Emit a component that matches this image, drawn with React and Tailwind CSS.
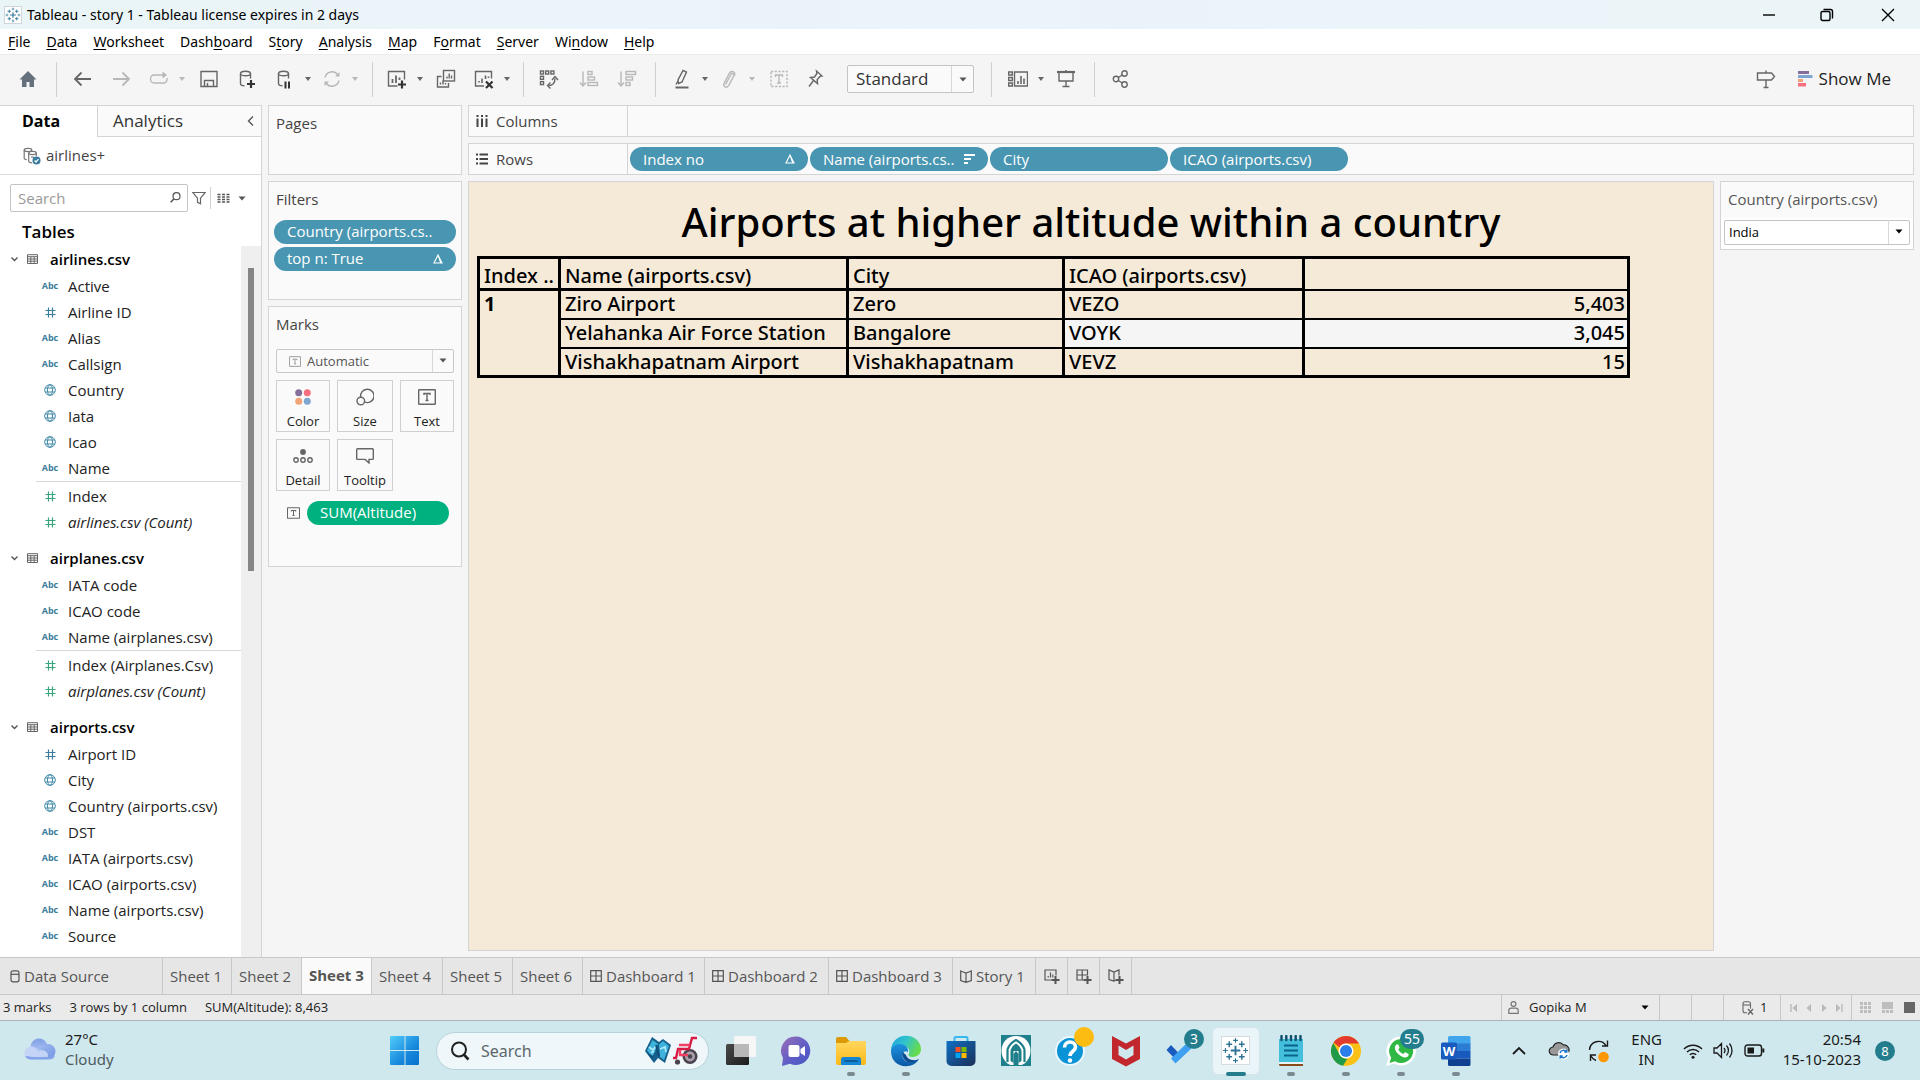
import { useState } from "react";

/* ---------- small helpers ---------- */

function Icon({ size = 20, w, h, box = "0 0 20 20", className = "", children }) {
  return (
    <svg
      width={w || size}
      height={h || size}
      viewBox={box}
      fill="none"
      stroke="currentColor"
      strokeWidth="1.4"
      className={"shrink-0 " + className}
      aria-hidden="true"
    >
      {children}
    </svg>
  );
}

function Caret({ className = "text-[#555]" }) {
  return (
    <svg width="8" height="5" viewBox="0 0 8 5" className={"shrink-0 " + className} aria-hidden="true">
      <path d="M0.5 0.5h7L4 4.5z" fill="currentColor" />
    </svg>
  );
}

function Tool({ label, className = "ml-[18px]", dim = false, children }) {
  return (
    <button
      type="button"
      aria-label={label}
      className={(dim ? "text-[#b8b8b8] " : "text-[#666] ") + "flex w-5 shrink-0 justify-center " + className}
    >
      <Icon>{children}</Icon>
    </button>
  );
}

function ToolCaret({ label, dim = false }) {
  return (
    <button type="button" aria-label={label} className="ml-[9px] flex h-5 w-2 shrink-0 items-center justify-center">
      <svg width="6" height="4" viewBox="0 0 6 4" aria-hidden="true">
        <path d="M0 0h6L3 4z" fill={dim ? "#b8b8b8" : "#666"} />
      </svg>
    </button>
  );
}

function Divider({ className = "ml-[18px]" }) {
  return <div className={"h-[35px] w-px shrink-0 bg-[#d0d0d0] " + className} />;
}

/* ---------- title, menu, toolbar ---------- */

function TableauMark({ size = 20, color = "#2f7396" }) {
  return (
    <svg width={size} height={size} viewBox="0 0 28 28" fill="none" stroke={color} aria-hidden="true">
      <path d="M14 9v10M9 14h10" strokeWidth="2" />
      <path d="M14 1v5M11.500 3.500h5M14 22v5M11.500 24.500h5" strokeWidth="1.100" />
      <path d="M3.500 11.500v5M1 14h5M24.500 11.500v5M22 14h5" strokeWidth="1.100" />
      <path
        d="M7.500 4.500v6M4.500 7.500h6M20.500 4.500v6M17.500 7.500h6M7.500 17.500v6M4.500 20.500h6M20.500 17.500v6M17.500 20.500h6"
        strokeWidth="1.500"
      />
    </svg>
  );
}

function TitleBar() {
  return (
    <header className="flex h-[29px] shrink-0 items-center bg-gradient-to-r from-[#eaf5f7] via-[#ebf3fb] to-[#ebf5f7] text-black">
      <div className="ml-1 flex size-[18px] items-center justify-center border border-[#cfd5d8] bg-white">
        <TableauMark size={16} />
      </div>
      <h1 className="ml-[5px] font-['Noto_Sans'] text-[14px]">Tableau - story 1 - Tableau license expires in 2 days</h1>
      <div className="ml-auto flex">
        <button type="button" aria-label="Minimize" className="flex h-7 w-[58px] items-center justify-center">
          <Icon size={14} box="0 0 14 14"><path d="M1 7h12" /></Icon>
        </button>
        <button type="button" aria-label="Restore" className="flex h-7 w-[58px] items-center justify-center">
          <Icon size={14} box="0 0 14 14">
            <rect x="1" y="3.500" width="9" height="9" rx="1.500" />
            <path d="M3.500 1.500h7a2 2 0 0 1 2 2v7" />
          </Icon>
        </button>
        <button type="button" aria-label="Close" className="flex h-7 w-16 items-center justify-center">
          <Icon size={14} box="0 0 14 14"><path d="M1 1l12 12M13 1L1 13" /></Icon>
        </button>
      </div>
    </header>
  );
}

const MENUS = [
  ["", "F", "ile"],
  ["", "D", "ata"],
  ["", "W", "orksheet"],
  ["Dash", "b", "oard"],
  ["S", "t", "ory"],
  ["", "A", "nalysis"],
  ["", "M", "ap"],
  ["F", "o", "rmat"],
  ["", "S", "erver"],
  ["Wi", "n", "dow"],
  ["", "H", "elp"],
];

function MenuBar() {
  return (
    <nav className="flex h-[25px] shrink-0 items-center gap-4 bg-white pl-2 font-['Noto_Sans'] text-[14px] text-black">
      {MENUS.map(([a, u, b]) => (
        <button type="button" key={a + u + b}>
          {a}
          <span className="underline underline-offset-2">{u}</span>
          {b}
        </button>
      ))}
    </nav>
  );
}

function Toolbar() {
  return (
    <div className="flex h-[51px] shrink-0 items-center border-t border-[#ececec] bg-[#f5f5f5] pb-0.5">
      <Tool label="Home">
        <path d="M10 2L1.500 10.500H4V18h4.500v-5h3v5H16v-7.500h2.500z" fill="#64707c" stroke="none" />
      </Tool>
      <Divider />
      <Tool label="Back" className="ml-4"><path d="M18 10H2M8.500 3.500L2 10l6.500 6.500" strokeWidth="1.800" /></Tool>
      <Tool label="Forward" dim><path d="M2 10h16M11.500 3.500L18 10l-6.500 6.500" strokeWidth="1.800" /></Tool>
      <Tool label="Redo" dim>
        <path d="M17 6H5a3.500 4 0 0 0 0 8h10a3.500 4 0 0 0 3-5" />
        <path d="M13.500 2.500L18 6l-4.500 3.500z" fill="currentColor" stroke="none" />
      </Tool>
      <ToolCaret label="Redo options" dim />
      <Tool label="Save" className="ml-[13px]">
        <path d="M2 2.500h16v15H2z" />
        <path d="M5.500 17.500v-6h9v6M8.500 17.500v-3.500" />
      </Tool>
      <Tool label="New data source">
        <ellipse cx="8.500" cy="4.500" rx="5" ry="2.300" />
        <path d="M3.500 4.500v10c0 1.500 1.500 2.300 4 2.300M13.500 4.500v5" />
        <path d="M14 11v8M10 15h8" stroke="#333" strokeWidth="2.200" />
      </Tool>
      <Tool label="Pause updates">
        <ellipse cx="8.500" cy="4.500" rx="5" ry="2.300" />
        <path d="M3.500 4.500v10c0 1.500 1.500 2.300 4 2.300M13.500 4.500v5" />
        <path d="M10.500 12.500v7M14 12.500v7" stroke="#333" strokeWidth="2" />
      </Tool>
      <ToolCaret label="Pause options" />
      <Tool label="Refresh" dim className="ml-[10px]">
        <path d="M3 8.500A7.200 7.200 0 0 1 16 6M17 11.500A7.200 7.200 0 0 1 4 14" />
        <path d="M17.500 3v4.500H13zM2.500 17v-4.500H7z" fill="currentColor" stroke="none" />
      </Tool>
      <ToolCaret label="Refresh options" dim />
      <Divider className="ml-[13px]" />
      <Tool label="New worksheet" className="ml-[14px]">
        <path d="M10.500 17H1.500V2.500H17.500v8" />
        <path d="M5.500 14V10M9 14V6.500M12.500 11V8.500" strokeWidth="1.800" />
        <path d="M15 11.500v8M11 15.500h8" stroke="#333" strokeWidth="2.200" />
      </Tool>
      <ToolCaret label="Worksheet options" />
      <Tool label="Duplicate" className="ml-3">
        <rect x="7.500" y="1.500" width="11" height="10.500" />
        <path d="M5.500 7.500H1.500v10.500h11v-4M4.500 15.500v-2M7 15.500v-4M9.500 15.500v-1.500M11 9.500v-2M13.200 9.500v-5M15.500 9.500v-3" />
      </Tool>
      <Tool label="Clear sheet">
        <path d="M10 17H1.500V2.500H17.500v7" />
        <path d="M5 13.500v-1.500M8 14V9.500M11.500 10V6.500M14.500 9V7.500" strokeWidth="1.600" />
        <path d="M12 12.500l6.500 6.500M18.500 12.500L12 19" stroke="#333" strokeWidth="2.200" />
      </Tool>
      <ToolCaret label="Clear options" />
      <Divider className="ml-3" />
      <Tool label="Swap rows and columns" className="ml-[15px]">
        <rect x="1.500" y="2" width="3" height="3" />
        <rect x="6.700" y="2" width="3" height="3" />
        <rect x="11.900" y="2" width="3" height="3" />
        <rect x="1.500" y="7.300" width="3" height="3" />
        <rect x="1.500" y="12.600" width="3" height="3" />
        <path d="M9.500 16.500c4 0 6.500-2.500 6.500-7" />
        <path d="M13 11l3-3.500 3 3.500M11.500 13.500l-3 3 3 3" />
      </Tool>
      <Tool label="Sort ascending" dim className="ml-5">
        <path d="M4 2.500v14M1 13.500L4 17l3-3.500" />
        <rect x="9" y="2.500" width="4" height="3" />
        <rect x="9" y="8" width="6.500" height="3" />
        <rect x="9" y="13.500" width="9.500" height="3" />
      </Tool>
      <Tool label="Sort descending" dim>
        <path d="M4 2.500v14M1 13.500L4 17l3-3.500" />
        <rect x="9" y="2.500" width="9.500" height="3" />
        <rect x="9" y="8" width="6.500" height="3" />
        <rect x="9" y="13.500" width="4" height="3" />
      </Tool>
      <Divider />
      <Tool label="Highlight" className="ml-4">
        <path d="M11 1.500l3.500 1.500-4.500 10-3.500 1.500-.5-3.500zM6 12l-2 3.500" />
        <path d="M3.500 18.500h13" strokeWidth="2" />
      </Tool>
      <ToolCaret label="Highlight options" />
      <Tool label="Group members" dim className="ml-[10px]">
        <path d="M6.500 15.500l5.500-10c1.200-2 3.800-.8 2.800 1.400l-5 9.500c-2 3.300-6.500 1.500-4.600-2.300l5-9.500C12 1 17 2.500 15.500 6.500" />
      </Tool>
      <ToolCaret label="Group options" dim />
      <Tool label="Show mark labels" dim className="ml-[13px]">
        <rect x="2" y="2.500" width="16" height="15" strokeDasharray="2.200 1.500" />
        <path d="M6.500 8V6h7v2M10 6v8M8 14h4" />
      </Tool>
      <Tool label="Fix axes" className="ml-4">
        <path d="M11.500 2l5.500 5-2 .4-2.800 3 .3 4.100L5.500 8.500l4-.5 2.400-3.500zM8.500 11.500L4 17.500" />
      </Tool>
      <label className="ml-[22px] flex">
        <span className="sr-only">Fit</span>
        <span className="relative flex">
          <select className="h-7 w-[127px] appearance-none rounded-xs border border-[#c4c4c4] bg-[#fafafa] pl-2 text-[17px] leading-6 text-[#333]">
            <option>Standard</option>
          </select>
          <span className="pointer-events-none absolute inset-y-px right-px flex w-[22px] items-center justify-center border-l border-[#d8d8d8]">
            <Caret />
          </span>
        </span>
      </label>
      <Divider className="ml-[17px]" />
      <Tool label="Show cards" className="ml-4">
        <path d="M.7 3h3.600v3H.7zM.7 8.500h3.600v3H.7zM.7 14h3.600v3H.7zM6.500 3h13v14h-13z" />
        <path d="M10 15v-3M13 15V7M16 15V9.500" strokeWidth="1.600" />
      </Tool>
      <ToolCaret label="Card options" />
      <Tool label="Presentation mode" className="ml-[11px]">
        <path d="M1 3h18" strokeWidth="2.200" />
        <path d="M3 4v8h14V4M10 12v5.500M6.500 17.500h7M10 1v2" />
      </Tool>
      <Divider />
      <Tool label="Share" className="ml-4">
        <circle cx="5" cy="10" r="2.700" />
        <circle cx="13.500" cy="4.500" r="2.700" />
        <circle cx="13.500" cy="15.500" r="2.700" />
        <path d="M7.300 8.500l4-2.500M7.300 11.500l4 2.500" />
      </Tool>
      <div className="ml-auto flex items-center pr-[29px]">
        <Tool label="Data guide" className="mr-[22px]">
          <path d="M1.500 4h14l3 3.500-3 3.500h-14zM10 1.500V4M10 11v7.500M7.500 18.500h5" />
        </Tool>
        <button type="button" className="flex items-center gap-1.5 text-[17px] text-[#222]">
          <svg width="15" height="16" viewBox="0 0 15 16" aria-hidden="true">
            <path d="M0 0h11v3H0z" fill="#84709a" />
            <path d="M0 4h14.500v3H0z" fill="#7fa6cf" />
            <path d="M0 8h5v3H0z" fill="#f2a477" />
            <path d="M0 12h8v3.500H0z" fill="#f8707f" />
          </svg>
          Show Me
        </button>
      </div>
    </div>
  );
}

/* ---------- data pane ---------- */

const TABLES = [
  {
    name: "airlines.csv",
    dims: [
      ["abc", "Active"],
      ["num", "Airline ID"],
      ["abc", "Alias"],
      ["abc", "Callsign"],
      ["geo", "Country"],
      ["geo", "Iata"],
      ["geo", "Icao"],
      ["abc", "Name"],
    ],
    measures: ["Index", "airlines.csv (Count)"],
  },
  {
    name: "airplanes.csv",
    dims: [
      ["abc", "IATA code"],
      ["abc", "ICAO code"],
      ["abc", "Name (airplanes.csv)"],
    ],
    measures: ["Index (Airplanes.Csv)", "airplanes.csv (Count)"],
  },
  {
    name: "airports.csv",
    dims: [
      ["num", "Airport ID"],
      ["geo", "City"],
      ["geo", "Country (airports.csv)"],
      ["abc", "DST"],
      ["abc", "IATA (airports.csv)"],
      ["abc", "ICAO (airports.csv)"],
      ["abc", "Name (airports.csv)"],
      ["abc", "Source"],
    ],
    measures: [],
  },
];

function FieldIcon({ kind }) {
  if (kind === "abc") return <span className="text-[9px] font-bold text-[#3c7d9c]">Abc</span>;
  if (kind === "geo")
    return (
      <Icon size={12} box="0 0 12 12" className="text-[#4189a8]">
        <g strokeWidth="1">
          <circle cx="6" cy="6" r="5.300" />
          <ellipse cx="6" cy="6" rx="2.500" ry="5.300" />
          <path d="M1.200 4h9.600M1.200 8h9.600" />
        </g>
      </Icon>
    );
  return (
    <Icon size={11} box="0 0 11 11" className={kind === "sum" ? "text-[#3aa57d]" : "text-[#3c7d9c]"}>
      <path d="M3.500 .5v10M7.500 .5v10M.5 3.500h10M.5 7.500h10" strokeWidth="1.200" />
    </Icon>
  );
}

function Field({ kind, name }) {
  return (
    <li className="flex h-[26px] items-center">
      <span className="flex w-7 justify-center">
        <FieldIcon kind={kind} />
      </span>
      <span className={"ml-1 whitespace-nowrap text-[15px] text-[#222]" + (name.includes("(Count)") ? " italic" : "")}>
        {name}
      </span>
    </li>
  );
}

function DataPane() {
  return (
    <aside className="flex w-[262px] shrink-0 flex-col border-r border-[#d4d4d4] bg-white">
      <div className="flex h-8 shrink-0" role="tablist">
        <button type="button" role="tab" aria-selected="true" className="w-[97px] border-t border-[#d4d4d4] pr-[15px] pb-0.5 text-[16px] font-bold text-black">
          Data
        </button>
        <button
          type="button"
          role="tab"
          aria-selected="false"
          className="flex flex-1 items-center justify-between border border-r-0 border-[#d4d4d4] bg-[#fafafa] pr-[7px] pl-[15px] text-[17px] text-[#333]"
        >
          Analytics
          <Icon w={7} h={12} box="0 0 7 12" className="text-[#555]"><path d="M6 1.500L1.500 6 6 10.500" /></Icon>
        </button>
      </div>
      <div className="flex h-[38px] shrink-0 items-center border-b border-[#dcdcdc] pl-[23px] text-[15px] text-[#444]">
        <Icon size={18} box="0 0 18 18" className="mr-[5px] text-[#777]">
          <g strokeWidth="1.200">
            <ellipse cx="5" cy="3" rx="3.800" ry="1.600" />
            <path d="M1.200 3v8c0 1 1.200 1.600 2.500 1.700" />
            <ellipse cx="9.500" cy="6" rx="3.800" ry="1.600" />
            <path d="M5.700 6v8c0 1.200 1.500 1.800 3.500 1.800M13.300 6v3M8 10h2l1 2" />
          </g>
          <circle cx="13.500" cy="13.500" r="4" fill="#3a7ca0" stroke="none" />
          <path d="M11.600 13.500l1.400 1.500 2.500-2.800" stroke="#fff" strokeWidth="1.200" />
        </Icon>
        airlines+
      </div>
      <div className="flex h-[46px] shrink-0 items-center pl-2.5">
        <label className="relative flex">
          <span className="sr-only">Search fields</span>
          <input
            type="text"
            placeholder="Search"
            className="h-7 w-[178px] rounded-xs border border-[#c4c4c4] bg-white pl-[7px] text-[15px] leading-6 placeholder:text-[#9a9a9a]"
          />
          <Icon size={11} box="0 0 11 11" className="pointer-events-none absolute top-2 right-[7px] text-[#555]">
            <circle cx="6.500" cy="4.200" r="3.500" strokeWidth="1.200" />
            <path d="M4 6.700L.7 10.300" strokeWidth="1.600" />
          </Icon>
        </label>
        <button type="button" aria-label="Filter fields" className="ml-1 text-[#666]">
          <Icon size={14} box="0 0 14 14"><path d="M.8 1.500h12.400L8.500 7.200v5.600l-3-1.500V7.200z" strokeWidth="1.200" /></Icon>
        </button>
        <span className="ml-1 h-[22px] w-px bg-[#d0d0d0]" />
        <button type="button" aria-label="View options" className="ml-1.5 flex items-center gap-2 text-[#555]">
          <Icon w={13} h={11} box="0 0 13 11">
            <path d="M.5 1.500h3M5 1.500h3M9.500 1.500h3M.5 4h3M5 4h3M9.500 4h3M.5 6.500h3M5 6.500h3M9.500 6.500h3M.5 9h3M5 9h3M9.500 9h3" strokeWidth="1.300" />
          </Icon>
          <Caret />
        </button>
      </div>
      <h2 className="flex h-[25px] shrink-0 items-center pb-1 pl-[22px] text-[17px] leading-5 font-semibold text-black">Tables</h2>
      <div className="flex min-h-0 flex-1">
        <div className="flex min-w-0 flex-1 flex-col gap-2.5">
          {TABLES.map((t) => (
            <section key={t.name}>
              <h3 className="flex h-[27px] items-center pb-px pl-[11px] text-[15px] font-semibold text-black">
                <Icon w={7} h={6} box="0 0 7 6" className="text-[#555]"><path d="M.5 1.500l3 3 3-3" /></Icon>
                <Icon w={11} h={10} box="0 0 11 10" className="ml-[9px] text-[#666]">
                  <path d="M.5 .7h10v8.800H.5zM.5 2.700h10M.5 5h10M.5 7.200h10M3.800 3v6M7.200 3v6" strokeWidth="1" />
                </Icon>
                <span className="ml-3">{t.name}</span>
              </h3>
              <ul className="ml-9">
                {t.dims.map(([k, n]) => (
                  <Field key={n} kind={k} name={n} />
                ))}
              </ul>
              {t.measures.length > 0 && (
                <ul className="ml-9 border-t border-[#d8d8d8] pt-px">
                  {t.measures.map((n) => (
                    <Field key={n} kind="sum" name={n} />
                  ))}
                </ul>
              )}
            </section>
          ))}
        </div>
        <div className="w-5 shrink-0 bg-[#efefef] pt-[22px] pl-[7px]">
          <div className="h-[303px] w-1.5 bg-[#858585]" />
        </div>
      </div>
    </aside>
  );
}

/* ---------- shelves and cards ---------- */

function Delta() {
  return (
    <Icon w={10} h={10} box="0 0 10 10" className="ml-auto">
      <path d="M5 1L1 9h8zM5 1l2.800 8" strokeWidth="1.100" />
    </Icon>
  );
}

function Pill({ children, icon, className = "bg-[#4996b2]" }) {
  return (
    <button
      type="button"
      className={"flex h-6 items-center rounded-full pr-[13px] pl-[13px] text-[15px] font-medium whitespace-nowrap text-white " + className}
    >
      {children}
      {icon}
    </button>
  );
}

function TIcon({ w = 13, h = 12, className = "text-[#666]" }) {
  return (
    <Icon w={w} h={h} box="0 0 18 16" className={className}>
      <rect x=".7" y=".7" width="16.600" height="14.600" rx=".5" />
      <path d="M6 6V4.500h6V6M9 4.500v7M7.500 11.500h3" />
    </Icon>
  );
}

function MarkButton({ label, children }) {
  return (
    <button
      type="button"
      className="flex h-[52px] flex-col items-center justify-between border border-[#d0d0d0] bg-[#fafafa] pt-[7px] text-[13px] text-[#222]"
    >
      <span className="flex h-[18px] items-center text-[#666]">{children}</span>
      <span className="leading-5">{label}</span>
    </button>
  );
}

function Cards() {
  const card = "border border-[#d4d4d4] bg-[#fafafa]";
  return (
    <div className="flex w-[194px] shrink-0 flex-col gap-1.5">
      <section className={card + " h-[70px] px-[7px] pt-1.5"}>
        <h2 className="text-[15px] text-[#444]">Pages</h2>
      </section>
      <section className={card + " h-[119px] px-[5px] pt-1.5"}>
        <h2 className="pl-0.5 text-[15px] text-[#444]">Filters</h2>
        <div className="mt-[9px] flex flex-col gap-[3px]">
          <Pill>Country (airports.cs..</Pill>
          <Pill icon={<Delta />}>top n: True</Pill>
        </div>
      </section>
      <section className={card + " h-[261px] px-[7px] pt-1.5"}>
        <h2 className="text-[15px] text-[#444]">Marks</h2>
        <label className="relative mt-[13px] flex">
          <span className="sr-only">Mark type</span>
          <select className="h-6 w-full appearance-none rounded-xs border border-[#c8c8c8] bg-[#fafafa] pl-[30px] text-[13px] leading-5 text-[#555]">
            <option>Automatic</option>
          </select>
          <TIcon w={12} h={11} className="pointer-events-none absolute top-[7px] left-[13px] text-[#999]" />
          <span className="pointer-events-none absolute inset-y-px right-px flex w-[21px] items-center justify-center border-l border-[#d8d8d8]">
            <Caret />
          </span>
        </label>
        <div className="mt-[7px] grid grid-cols-[54fr_56fr_54fr] gap-[7px]">
          <MarkButton label="Color">
            <svg width="16" height="16" viewBox="0 0 16 16" aria-hidden="true">
              <circle cx="3.700" cy="3.700" r="3.500" fill="#84709a" />
              <circle cx="12.300" cy="3.700" r="3.500" fill="#f8707f" />
              <circle cx="3.700" cy="12.300" r="3.500" fill="#f2a477" />
              <circle cx="12.300" cy="12.300" r="3.500" fill="#7fa6cf" />
            </svg>
          </MarkButton>
          <MarkButton label="Size">
            <Icon size={18} box="0 0 18 18">
              <path d="M4.800 9.500A6.700 6.700 0 1 1 9 14.200" />
              <circle cx="4.800" cy="13" r="3.800" />
            </Icon>
          </MarkButton>
          <MarkButton label="Text"><TIcon w={18} h={16} /></MarkButton>
          <MarkButton label="Detail">
            <Icon w={20} h={14} box="0 0 20 14">
              <circle cx="10" cy="3" r="2.900" fill="currentColor" stroke="none" />
              <circle cx="3" cy="11" r="2.200" />
              <circle cx="10" cy="11" r="2.200" />
              <circle cx="17" cy="11" r="2.200" />
            </Icon>
          </MarkButton>
          <MarkButton label="Tooltip">
            <Icon w={18} h={16} box="0 0 18 16"><path d="M1.500 .8h15a.8.8 0 0 1 .8.8v9a.8.8 0 0 1-.8.8H13V15l-3.800-3.600H1.500a.8.8 0 0 1-.8-.8v-9a.8.8 0 0 1 .8-.8z" /></Icon>
          </MarkButton>
        </div>
        <div className="mt-2.5 flex items-center pr-[5px] pl-[11px]">
          <TIcon />
          <Pill className="ml-[7px] flex-1 bg-[#00b180]">SUM(Altitude)</Pill>
        </div>
      </section>
    </div>
  );
}

function Shelf({ label, icon, children }) {
  return (
    <div className="flex h-8 border border-[#d4d4d4] bg-[#fafafa]">
      <div className="flex w-[159px] shrink-0 items-center border-r border-[#d4d4d4] pl-[7px] text-[15px] text-[#444]">
        {icon}
        {label}
      </div>
      <div className="flex items-center gap-0.5 pl-0.5">{children}</div>
    </div>
  );
}

/* ---------- worksheet ---------- */

const ROWS = [
  ["Ziro Airport", "Zero", "VEZO", "5,403"],
  ["Yelahanka Air Force Station", "Bangalore", "VOYK", "3,045"],
  ["Vishakhapatnam Airport", "Vishakhapatnam", "VEVZ", "15"],
];

function Sheet() {
  const cell = "h-[29px] border-x-3 border-y-2 border-black p-0 pl-1 leading-[26px]";
  const head = "h-[31px] border-x-3 border-t-3 border-b-3 border-black p-0 pt-1 pl-1 text-left font-medium leading-[25px]";
  return (
    <main className="min-w-0 flex-1 border border-[#d4d4d4] bg-[#f5ead8] font-['Noto_Sans'] text-black">
      <h2 className="pt-3 text-center text-[40px] leading-[56px] font-medium">Airports at higher altitude within a country</h2>
      <table className="mt-1.5 ml-2 w-[1153px] table-fixed border-collapse border-3 border-black text-[20px] font-medium whitespace-nowrap">
        <colgroup>
          <col className="w-[81px]" />
          <col className="w-[288px]" />
          <col className="w-[216px]" />
          <col className="w-[240px]" />
          <col />
        </colgroup>
        <thead>
          <tr>
            <th className={head}>Index ..</th>
            <th className={head}>Name (airports.csv)</th>
            <th className={head}>City</th>
            <th className={head}>ICAO (airports.csv)</th>
            <td className="border-x-3 border-y-2 border-black" />
          </tr>
        </thead>
        <tbody>
          {ROWS.map(([name, city, code, alt], i) => (
            <tr key={code}>
              {i === 0 && (
                <th rowSpan={3} className={cell + " text-left align-top font-bold"}>
                  1
                </th>
              )}
              <td className={cell}>{name}</td>
              <td className={cell}>{city}</td>
              <td className={cell + (i === 1 ? " bg-[#f5f5f5]" : "")}>{code}</td>
              <td className={cell + " pr-0.5 text-right" + (i === 1 ? " bg-[#f5f5f5]" : "")}>{alt}</td>
            </tr>
          ))}
        </tbody>
      </table>
    </main>
  );
}

function FilterCard() {
  return (
    <aside className="flex h-[69px] w-[194px] shrink-0 flex-col border border-[#d4d4d4] bg-white">
      <label htmlFor="country" className="flex h-[36px] items-center bg-[#fafafa] pb-0.5 pl-[7px] text-[15px] text-[#555]">
        Country (airports.csv)
      </label>
      <div className="relative mx-[3px] mt-px">
        <select id="country" className="h-[25px] w-full appearance-none rounded-xs border border-[#c4c4c4] bg-white pl-1 text-[13px] leading-5 text-black">
          <option>India</option>
        </select>
        <span className="pointer-events-none absolute inset-y-px right-px flex w-[21px] items-center justify-center border-l border-[#d8d8d8]">
          <Caret className="text-black" />
        </span>
      </div>
    </aside>
  );
}

/* ---------- sheet tabs and status ---------- */

function DashIcon() {
  return (
    <Icon size={12} box="0 0 12 12"><path d="M.7 .7h10.600v10.600H.7zM6 .7v10.600M.7 6h10.600" strokeWidth="1.200" /></Icon>
  );
}

function StoryIcon() {
  return (
    <Icon w={12} h={13} box="0 0 12 13"><path d="M.7 1l1.800.8L6 3l3.500-1.200L11.300 1v9.500L6 12.300.7 10.500zM6 3v9" strokeWidth="1.200" /></Icon>
  );
}

const TABS = [
  ["Data Source", "w-[163px] pl-2.5", "data"],
  ["Sheet 1", "w-[69px] pl-[7px]"],
  ["Sheet 2", "w-[70px] pl-[7px]"],
  ["Sheet 3", "w-[70px] pl-[7px]"],
  ["Sheet 4", "w-[71px] pl-[7px]"],
  ["Sheet 5", "w-[70px] pl-[7px]"],
  ["Sheet 6", "w-[70px] pl-[7px]"],
  ["Dashboard 1", "w-[122px] pl-[7px]", "dash"],
  ["Dashboard 2", "w-[124px] pl-[7px]", "dash"],
  ["Dashboard 3", "w-[124px] pl-[7px]", "dash"],
  ["Story 1", "w-[83px] pl-[7px]", "story"],
];

function SheetTabs() {
  const [active, setActive] = useState("Sheet 3");
  return (
    <div className="flex h-[38px] shrink-0 border-y border-[#c8c8c8] bg-[#e6e6e6] text-[15px] text-[#555]">
      {TABS.map(([name, w, kind]) => (
        <button
          type="button"
          key={name}
          onClick={() => setActive(name)}
          className={
            "flex shrink-0 items-center gap-1 border-r border-[#c8c8c8] whitespace-nowrap " +
            w +
            (active === name ? " bg-[#fafafa] pb-0.5 font-bold" : "")
          }
        >
          {kind === "data" && (
            <Icon w={10} h={13} box="0 0 10 13">
              <rect x="1" y=".8" width="8" height="11" rx="2" strokeWidth="1.200" />
              <path d="M1 4.300h8" strokeWidth="1.200" />
            </Icon>
          )}
          {kind === "dash" && <DashIcon />}
          {kind === "story" && <StoryIcon />}
          {name}
        </button>
      ))}
      <button type="button" aria-label="New Worksheet" className="flex w-8 items-center justify-center border-r border-[#c8c8c8]">
        <Icon w={16} h={15} box="0 0 16 15">
          <path d="M7.500 11H1V1h11v5.500M4.200 8.500V7M6.500 8.500V3.500M8.800 8.500V5.500" strokeWidth="1.200" />
          <path d="M11.500 7v8M7.500 11h8" strokeWidth="2" />
        </Icon>
      </button>
      <button type="button" aria-label="New Dashboard" className="flex w-8 items-center justify-center border-r border-[#c8c8c8]">
        <Icon w={16} h={15} box="0 0 16 15">
          <path d="M7.500 11H1V1h10.500v5.500M6.200 1v10M1 6h10.500" strokeWidth="1.200" />
          <path d="M11.500 7v8M7.500 11h8" strokeWidth="2" />
        </Icon>
      </button>
      <button type="button" aria-label="New Story" className="flex w-8 items-center justify-center border-r border-[#c8c8c8]">
        <Icon w={16} h={15} box="0 0 16 15">
          <path d="M7.500 11.500L6 12 1 10.500V1l5 2 5-2v5.500M6 3v9" strokeWidth="1.200" />
          <path d="M11.500 7v8M7.500 11h8" strokeWidth="2" />
        </Icon>
      </button>
    </div>
  );
}

function StatusBar() {
  const c = "flex items-center border-l border-[#c8c8c8]";
  return (
    <footer className="flex h-[26px] shrink-0 border-b border-[#a9b4b8] bg-[#eaeaea] text-[13px] text-[#222]">
      <div className="flex items-center gap-[18px] pl-[3px]">
        <span>3 marks</span>
        <span>3 rows by 1 column</span>
        <span>SUM(Altitude): 8,463</span>
      </div>
      <div className="ml-auto flex">
        <button type="button" className={c + " w-[158px] pr-2.5 pl-1.5"}>
          <Icon w={11} h={13} box="0 0 11 13" className="mr-2.5 text-[#777]">
            <circle cx="5.500" cy="3" r="2.400" strokeWidth="1.200" />
            <path d="M.8 12.300V9.500c0-1.500 1.200-2.300 2.500-2.300h4.400c1.300 0 2.500.8 2.500 2.300v2.800z" strokeWidth="1.200" />
          </Icon>
          Gopika M
          <span className="ml-auto"><Caret className="text-black" /></span>
        </button>
        <div className={c + " w-8"} />
        <div className={c + " w-8"} />
        <div className={c + " w-[57px] gap-1.5 pl-[18px]"}>
          <Icon w={12} h={14} box="0 0 12 14" className="text-[#666]">
            <rect x="1" y=".8" width="7.500" height="11" rx="2" strokeWidth="1.100" />
            <path d="M1 4h7.500" strokeWidth="1.100" />
            <path d="M6 8l5 5.500M11 8l-5 5.500" stroke="#eaeaea" strokeWidth="4" />
            <path d="M6 8l5 5.500M11 8l-5 5.500" />
          </Icon>
          1
        </div>
        <div className={c + " w-[71px] justify-center gap-[9px] text-[#b9b9b9]"}>
          <button type="button" aria-label="First"><Icon w={7} h={8} box="0 0 7 8"><path d="M1 0v8" /><path d="M7 0v8L2.500 4z" fill="currentColor" stroke="none" /></Icon></button>
          <button type="button" aria-label="Previous"><Icon w={6} h={8} box="0 0 6 8"><path d="M5 0v8L.5 4z" fill="currentColor" stroke="none" /></Icon></button>
          <button type="button" aria-label="Next"><Icon w={6} h={8} box="0 0 6 8"><path d="M1 0v8l4.500-4z" fill="currentColor" stroke="none" /></Icon></button>
          <button type="button" aria-label="Last"><Icon w={7} h={8} box="0 0 7 8"><path d="M6 0v8" /><path d="M0 0v8l4.500-4z" fill="currentColor" stroke="none" /></Icon></button>
        </div>
        <div className={c + " w-[69px] gap-[11px] pl-2 text-[#bdbdbd]"}>
          <button type="button" aria-label="Show sheet sorter">
            <svg width="11" height="11" viewBox="0 0 11 11" fill="currentColor" aria-hidden="true">
              <path d="M0 0h3v3H0zM4 0h3v3H4zM8 0h3v3H8zM0 4h3v3H0zM4 4h3v3H4zM8 4h3v3H8zM0 8h3v3H0zM4 8h3v3H4zM8 8h3v3H8z" />
            </svg>
          </button>
          <button type="button" aria-label="Show filmstrip">
            <svg width="11" height="11" viewBox="0 0 11 11" fill="currentColor" aria-hidden="true">
              <path d="M0 0h11v7H0zM0 8h3v3H0zM4 8h3v3H4zM8 8h3v3H8z" />
            </svg>
          </button>
          <button type="button" aria-label="Show tabs">
            <svg width="11" height="11" viewBox="0 0 11 11" fill="#666" aria-hidden="true"><path d="M0 0h11v11H0z" /></svg>
          </button>
        </div>
      </div>
    </footer>
  );
}

/* ---------- desktop taskbar ---------- */

function App32({ children }) {
  return (
    <svg width="32" height="32" viewBox="0 0 32 32" fill="none" aria-hidden="true">
      {children}
    </svg>
  );
}

function Task({ label, open, active, badge, children }) {
  return (
    <button type="button" aria-label={label} className="relative flex w-[55px] items-center justify-center">
      <span
        className={
          "flex h-12 w-12 items-center justify-center rounded-md" + (active ? " border border-[#d5e4e8] bg-[#e9f5f8]" : "")
        }
      >
        {children}
      </span>
      {badge}
      {open && <span className="absolute bottom-1 left-6 h-1 w-2 rounded-full bg-[#7b8a8e]" />}
      {active && <span className="absolute bottom-1 left-[18px] h-1 w-5 rounded-full bg-[#237d8c]" />}
    </button>
  );
}

function Badge({ children }) {
  return (
    <span className="absolute top-2 right-1 flex h-5 min-w-5 items-center justify-center rounded-full bg-[#237d8c] px-1 text-[14px] text-white">
      {children}
    </span>
  );
}

function Taskbar() {
  return (
    <footer className="flex h-[59px] shrink-0 items-stretch bg-[#cfe8ee] font-['Noto_Sans'] text-[15px] leading-5 text-[#1a1a1a]">
      <button type="button" className="flex w-[381px] items-center gap-[9px] pb-1 pl-6 text-left">
        <svg width="32" height="22" viewBox="0 0 32 22" aria-hidden="true">
          <defs>
            <linearGradient id="cloud" x1="0" y1="0" x2="0" y2="1">
              <stop offset="0" stopColor="#7f9fe6" />
              <stop offset="1" stopColor="#b9cdf5" />
            </linearGradient>
            <linearGradient id="cloudBack" x1="0" y1="0" x2="1" y2="1">
              <stop offset="0" stopColor="#9fbaf0" />
              <stop offset="1" stopColor="#7394e2" />
            </linearGradient>
          </defs>
          <circle cx="15" cy="9" r="8.500" fill="url(#cloud)" />
          <circle cx="24" cy="13.500" r="7.500" fill="url(#cloudBack)" />
          <path d="M7 8.500c4 0 6.500 2.500 7.500 5 2-2 7-1.500 9 2 1.500 3-.5 6-3.500 6H7a6.500 6.500 0 0 1 0-13z" fill="#c3d4f7" />
          <path d="M7 21.500h18c2.500 0 5-1 6-4-5 2.200-25 2.200-30 0 1 3 3.500 4 6 4z" fill="#85a3ea" />
        </svg>
        <span className="flex flex-col">
          <span>27°C</span>
          <span className="text-[#4d5c61]">Cloudy</span>
        </span>
      </button>
      <button type="button" aria-label="Start" className="flex w-[55px] items-center pl-2">
        <App32>
          <defs>
            <linearGradient id="win" x1="0" y1="0" x2="1" y2="1">
              <stop offset="0" stopColor="#52cdfb" />
              <stop offset=".6" stopColor="#1889dd" />
              <stop offset="1" stopColor="#0670cc" />
            </linearGradient>
          </defs>
          <path d="M2 1h13.500v14H1V2a1 1 0 0 1 1-1zM16.500 1H29a1 1 0 0 1 1 1v13H16.500zM1 16h14.500v14H2a1 1 0 0 1-1-1zM16.500 16H30v13a1 1 0 0 1-1 1H16.500z" fill="url(#win)" />
        </App32>
      </button>
      <label className="mr-1 flex h-[38px] w-[273px] items-center self-center rounded-full border border-[#b9d3da] bg-[#eff7fa] pr-2 pl-[13px]">
        <Icon size={20} box="0 0 20 20" className="text-[#222]">
          <circle cx="9" cy="8.500" r="7" strokeWidth="2" />
          <path d="M13.800 13.500L18.500 18.500" strokeWidth="2.600" />
        </Icon>
        <input type="text" aria-label="Search" placeholder="Search" className="ml-[11px] w-0 flex-1 text-[16px] leading-6 placeholder:text-[#5d666a]" />
        <svg width="56" height="30" viewBox="0 0 56 30" aria-hidden="true">
          <path d="M1 15L8 1l7 5 4-3 8 6-6 18-7-5-4 5z" fill="#155f8c" />
          <path d="M3 14.500L8.500 4l5.500 4-5.500 13zM15 8.500l4-3.500 6 5-5 14-4-3z" fill="#3fb2dc" />
          <path d="M5 11l4 3 3-4M16 13l5-2 1 5M7 17l3-2" stroke="#aee9fb" strokeWidth="1.700" fill="none" />
          <path d="M12 9l3 11" stroke="#0d4f78" strokeWidth="2" />
          <path d="M4 17l5 3-1 3z" fill="#0d4f78" />
          <circle cx="46" cy="20.500" r="7.500" fill="#4a434e" />
          <circle cx="46" cy="20.500" r="5" fill="#a99fab" />
          <circle cx="46" cy="20.500" r="2.300" fill="#4a434e" />
          <path d="M53 2h-5l-3 11H34l-2 9h-3" stroke="#d81b45" strokeWidth="2.400" fill="none" />
          <path d="M35 9h11M36 14v5h8" stroke="#ef3d63" strokeWidth="2.400" fill="none" />
          <circle cx="33.500" cy="26" r="2.600" fill="#4a434e" />
        </svg>
      </label>
      <Task label="Task view">
        <App32>
          <defs>
            <linearGradient id="tv" x1="0" y1="0" x2="1" y2="1">
              <stop offset="0" stopColor="#4a4a4a" />
              <stop offset="1" stopColor="#1c1c1c" />
            </linearGradient>
          </defs>
          <rect x="1" y="9" width="23" height="21" rx="1.500" fill="url(#tv)" />
          <rect x="9" y="1" width="22" height="21" rx="1.500" fill="#f6f6f6" />
          <path d="M9 9h15v13H10.500A1.500 1.500 0 0 1 9 20.500z" fill="#b8b8b8" />
        </App32>
      </Task>
      <Task label="Chat">
        <App32>
          <defs>
            <linearGradient id="chat" x1="0" y1="0" x2="1" y2="1">
              <stop offset="0" stopColor="#9b6fb5" />
              <stop offset=".6" stopColor="#5b5cc7" />
              <stop offset="1" stopColor="#4a55c0" />
            </linearGradient>
          </defs>
          <path d="M16 1.500a14.300 14.300 0 1 1-6 27.300L2 31l1-8A14.300 14.300 0 0 1 16 1.500z" fill="url(#chat)" />
          <rect x="8.500" y="10" width="11" height="12" rx="2" fill="#fff" />
          <path d="M20.500 14l4.500-3v10l-4.500-3z" fill="#fff" />
        </App32>
      </Task>
      <Task label="File Explorer" open>
        <App32>
          <defs>
            <linearGradient id="fold" x1="0" y1="0" x2="0" y2="1">
              <stop offset="0" stopColor="#ffd75e" />
              <stop offset="1" stopColor="#fbb917" />
            </linearGradient>
          </defs>
          <path d="M1 4a2 2 0 0 1 2-2h8l3.500 4H29a2 2 0 0 1 2 2v6H1z" fill="#dd9a06" />
          <path d="M1 8h10l3-2h15a2 2 0 0 1 2 2v20a2 2 0 0 1-2 2H3a2 2 0 0 1-2-2z" fill="url(#fold)" />
          <path d="M6 30v-5.500A2.500 2.500 0 0 1 8.500 22h15a2.500 2.500 0 0 1 2.500 2.500V30z" fill="#1385d2" />
          <path d="M9.500 26h13" stroke="#0b4f88" strokeWidth="1.500" />
        </App32>
      </Task>
      <Task label="Edge" open>
        <App32>
          <defs>
            <linearGradient id="edgeTop" x1="0" y1="0" x2="1" y2=".4">
              <stop offset="0" stopColor="#1f9fdc" />
              <stop offset=".5" stopColor="#2fc3cf" />
              <stop offset="1" stopColor="#66db4e" />
            </linearGradient>
            <linearGradient id="edgeBot" x1="0" y1="0" x2="0" y2="1">
              <stop offset="0" stopColor="#1d93e0" />
              <stop offset="1" stopColor="#0b57a4" />
            </linearGradient>
          </defs>
          <path d="M1 16C1 7 7.500 .8 16 .8S31 7 31 14c0 5-4 8-8.500 8-3 0-4.500-1.300-3.800-3 1.500-3 .5-7.500-5.500-8C6.500 10.500 1 14 1 18z" fill="url(#edgeTop)" />
          <path d="M1 16c1-5 6-8 11.500-6.500 4 1 6 4 5.500 7.500-3-2.500-7 1-5 6 2 4.500 9 6.500 16 1-3 5-7.500 7.200-13 7.200C7 31.200 1 25 1 16z" fill="url(#edgeBot)" />
          <path d="M12.500 17c-1 5 2 9.500 7 10.500 4 .7 7.500-1 9.500-3.500-5 2.500-11.500 1-13-4z" fill="#0c4a92" />
        </App32>
      </Task>
      <Task label="Microsoft Store">
        <App32>
          <defs>
            <linearGradient id="store" x1="0" y1="0" x2="1" y2="1">
              <stop offset="0" stopColor="#0e6fc4" />
              <stop offset="1" stopColor="#1c2f57" />
            </linearGradient>
          </defs>
          <path d="M9.500 7V3.500A1.500 1.500 0 0 1 11 2h10a1.500 1.500 0 0 1 1.500 1.500V7" stroke="#35b8f0" strokeWidth="2" />
          <path d="M1.500 6h29v20a5 5 0 0 1-5 5h-19a5 5 0 0 1-5-5z" fill="url(#store)" />
          <path d="M10.500 12h5v5h-5z" fill="#f25022" />
          <path d="M16.500 12h5v5h-5z" fill="#7fba00" />
          <path d="M10.500 18h5v5h-5z" fill="#00a4ef" />
          <path d="M16.500 18h5v5h-5z" fill="#ffb900" />
        </App32>
      </Task>
      <Task label="Safe browser">
        <App32>
          <path d="M1 0h30v31H1z" fill="#1f7f8a" />
          <path d="M16 1C8 1 1.500 7 1.500 15.500 1.500 23 6 28.500 10.500 30h11c4.500-1.500 9-7 9-14.500C30.500 7 24 1 16 1z" fill="#fff" />
          <path d="M7.500 27V14.500C9 10 12 7 16 5c4 2 7 5 8.500 9.500V27" stroke="#1f7f8a" strokeWidth="2.200" />
          <path d="M10.500 26V15.500c1-3.500 3-5.500 5.500-7 2.500 1.500 4.500 3.500 5.500 7V26l-3 2V16h-5v12z" fill="#1f7f8a" />
          <path d="M13.500 31V19l2.500-3 2.500 3v12z" fill="#1f7f8a" />
        </App32>
      </Task>
      <Task
        label="Help"
        badge={<span className="absolute top-1.5 right-1 size-5 rounded-full bg-[#fdbc12]" />}
      >
        <App32>
          <circle cx="15" cy="16" r="14" fill="#0b93d8" stroke="#eaf7fc" strokeWidth="2" />
          <path d="M9.500 12.500c0-7.500 11-7 11-.5 0 4.500-5.500 4-5.500 9" stroke="#fff" strokeWidth="3.600" />
          <circle cx="15" cy="25.500" r="2.200" fill="#fff" />
        </App32>
      </Task>
      <Task label="McAfee">
        <App32>
          <path d="M2 1l14 7.500L30 1v23l-14 7.500L2 24zM8.500 10.500V20l7.500 4.500 7.500-4.500v-9.500L16 15z" fill="#c1272d" fillRule="evenodd" />
        </App32>
      </Task>
      <Task label="To Do" badge={<Badge>3</Badge>}>
        <App32>
          <path d="M1.500 15l4.500-5 9 9.500-4.500 5z" fill="#185abd" />
          <path d="M10.500 28.500L6 23.500 24 6l5 5z" fill="#3ea0f0" />
        </App32>
      </Task>
      <Task label="Tableau" active>
        <span className="flex size-[29px] items-center justify-center border border-[#d8dcde] bg-white">
          <TableauMark size={27} />
        </span>
      </Task>
      <Task label="Notepad" open>
        <App32>
          <path d="M4 4h24v24H4z" fill="#43bfdc" />
          <path d="M4 28h24v3H5.500A1.500 1.500 0 0 1 4 29.500z" fill="#8a4b1c" />
          <path d="M4 27h24v2H4z" fill="#e8f4f8" />
          <path d="M6.500 1v4M11.300 1v4M16 1v4M20.700 1v4M25.500 1v4" stroke="#0d4f6c" strokeWidth="2.400" strokeLinecap="round" />
          <path d="M9 10.500h14M9 15.500h14M9 20.500h14" stroke="#0a6489" strokeWidth="2.200" />
        </App32>
      </Task>
      <Task label="Chrome" open>
        <App32>
          <circle cx="16" cy="16" r="15" fill="#fbc116" />
          <path d="M16 1a15 15 0 0 1 13 7.500H16a7.500 7.500 0 0 0-6.500 3.700L3.500 7.600A15 15 0 0 1 16 1z" fill="#e33b2e" />
          <path d="M3.300 7.900l6.300 11.400A7.500 7.500 0 0 0 17.500 23.400L13 30.700A15 15 0 0 1 3.300 7.900z" fill="#1f9a48" />
          <circle cx="16" cy="16" r="7.500" fill="#fff" />
          <circle cx="16" cy="16" r="6" fill="#2b7de9" />
        </App32>
      </Task>
      <Task label="WhatsApp" open badge={<Badge>55</Badge>}>
        <App32>
          <path d="M16 1.500a14.500 14.500 0 1 1-7 27L1 31l2.500-7.500A14.500 14.500 0 0 1 16 1.500z" fill="#fff" />
          <path d="M16 4a12 12 0 1 1-6 22.300L4.500 28l1.700-5.300A12 12 0 0 1 16 4z" fill="#2fb944" />
          <path d="M11.500 9.500c1-.6 1.700-.3 2 .5l1 2.300c.2.700-.1 1-1.200 2.300 1.200 2.200 2.800 3.500 5 4.500 1.500-1.900 1.700-2 2.300-1.700l2.700 1.300c.6.300.5 2-.8 3-2.500 1.800-6 .3-9-2.500-3.500-3.200-5-7.200-2-9.700z" fill="#fff" />
        </App32>
      </Task>
      <Task label="Word" open>
        <App32>
          <path d="M8 2.500A1.500 1.500 0 0 1 9.500 1H29a1.500 1.500 0 0 1 1.500 1.500V9H8z" fill="#41a5ee" />
          <path d="M8 8.500h22.500V16H8z" fill="#2b7cd3" />
          <path d="M8 16h22.500v7.500H8z" fill="#185abd" />
          <path d="M8 23.500h22.500v6A1.500 1.500 0 0 1 29 31H9.500A1.500 1.500 0 0 1 8 29.500z" fill="#103f91" />
          <rect x="1" y="7.500" width="16" height="17" rx="1.500" fill="#185abd" />
          <text x="9" y="20.500" textAnchor="middle" fontSize="13" fontWeight="700" fill="#fff" fontFamily="Noto Sans, sans-serif">W</text>
        </App32>
      </Task>
      <div className="ml-auto flex items-center pr-[25px] text-[#1a1a1a]">
        <button type="button" aria-label="Hidden icons">
          <Icon w={14} h={9} box="0 0 14 9"><path d="M1 8l6-6 6 6" strokeWidth="1.800" /></Icon>
        </button>
        <button type="button" aria-label="OneDrive" className="ml-[22px]">
          <Icon w={22} h={19} box="0 0 22 19">
            <path d="M5.500 14a4 4 0 0 1-.5-8 6 6 0 0 1 10.500-2 5 5 0 0 1 4.500 8 3 3 0 0 1-2 2z" fill="#999" stroke="#222" strokeWidth="1.200" />
            <circle cx="15.500" cy="13" r="5.500" fill="#fff" stroke="none" />
            <path d="M12 12a3.700 3.700 0 0 1 6.500-1.300M19 14a3.700 3.700 0 0 1-6.500 1.300M18.800 8.500v2.500h-2.500M12.200 17.500V15h2.500" stroke="#1673c9" strokeWidth="1.400" />
          </Icon>
        </button>
        <button type="button" aria-label="Updates" className="ml-[18px]">
          <Icon w={22} h={24} box="0 0 22 24">
            <path d="M1.500 11A9 9 0 0 1 18 6.500M19.500 1.500v5.500h-5.500M8 21.500A9 9 0 0 1 3 17M8 16H2.500v6" stroke="#1a1a1a" strokeWidth="1.400" />
            <circle cx="15.500" cy="18" r="5.300" fill="#ff9800" stroke="none" />
          </Icon>
        </button>
        <button type="button" className="ml-[21px] flex w-8 flex-col items-center pb-1 text-[15px]">
          <span>ENG</span>
          <span>IN</span>
        </button>
        <button type="button" aria-label="Network, volume and battery" className="ml-[20px] flex items-center gap-2.5">
          <Icon w={20} h={16} box="0 0 20 16">
            <path d="M1 6a12.500 12.500 0 0 1 18 0M4 9a8.500 8.500 0 0 1 12 0M6.800 11.800a4.500 4.500 0 0 1 6.400 0" strokeWidth="1.500" />
            <circle cx="10" cy="14.300" r="1.500" fill="currentColor" stroke="none" />
          </Icon>
          <Icon w={21} h={17} box="0 0 21 17">
            <path d="M1 6h3l4.500-4.500v14L4 11H1zM11 6a4 4 0 0 1 0 5M13.500 3.500a7.500 7.500 0 0 1 0 10M16.500 1.500a11 11 0 0 1 0 14" strokeWidth="1.300" />
          </Icon>
          <Icon w={21} h={13} box="0 0 21 13">
            <rect x="1" y="1" width="16.500" height="11" rx="2.500" strokeWidth="1.400" />
            <rect x="3.500" y="3.500" width="6.500" height="6" fill="currentColor" stroke="none" />
            <path d="M19.300 4.500v4" strokeWidth="2" />
          </Icon>
        </button>
        <button type="button" className="ml-[18px] flex flex-col items-end pb-1">
          <span>20:54</span>
          <span>15-10-2023</span>
        </button>
        <span className="ml-3.5 flex size-5 items-center justify-center rounded-full bg-[#237d8c] text-[13px] text-white">8</span>
      </div>
    </footer>
  );
}

/* ---------- page ---------- */

export default function App() {
  return (
    <div className="flex h-screen flex-col bg-[#f5f5f5] font-['Open_Sans',sans-serif]">
      <TitleBar />
      <MenuBar />
      <Toolbar />
      <div className="flex min-h-0 flex-1">
        <DataPane />
        <div className="flex min-w-0 flex-1 gap-1.5 pr-1.5 pb-1.5 pl-1.5">
          <Cards />
          <div className="flex min-w-0 flex-1 flex-col gap-1.5">
            <Shelf
              label="Columns"
              icon={
                <Icon w={12} h={12} box="0 0 12 12" className="mr-2 text-[#444]">
                  <path d="M1.500 0v2M6 0v2M10.500 0v2M1.500 3.500V12M6 3.500V12M10.500 3.500V12" strokeWidth="2" />
                </Icon>
              }
            />
            <Shelf
              label="Rows"
              icon={
                <Icon w={12} h={12} box="0 0 12 12" className="mr-2 text-[#444]">
                  <path d="M0 1.500h2M0 6h2M0 10.500h2M3.500 1.500H12M3.500 6H12M3.500 10.500H12" strokeWidth="2" />
                </Icon>
              }
            >
              <Pill className="w-[178px] bg-[#4996b2]" icon={<Delta />}>Index no</Pill>
              <Pill
                className="w-[178px] bg-[#4996b2]"
                icon={
                  <Icon w={11} h={10} box="0 0 11 10" className="ml-auto">
                    <path d="M0 1h11M0 5h7M0 9h4" strokeWidth="1.800" />
                  </Icon>
                }
              >
                Name (airports.cs..
              </Pill>
              <Pill className="w-[178px] bg-[#4996b2]">City</Pill>
              <Pill className="w-[178px] bg-[#4996b2]">ICAO (airports.csv)</Pill>
            </Shelf>
            <div className="flex min-h-0 flex-1 items-stretch gap-1.5">
              <Sheet />
              <FilterCard />
            </div>
          </div>
        </div>
      </div>
      <SheetTabs />
      <StatusBar />
      <Taskbar />
    </div>
  );
}
